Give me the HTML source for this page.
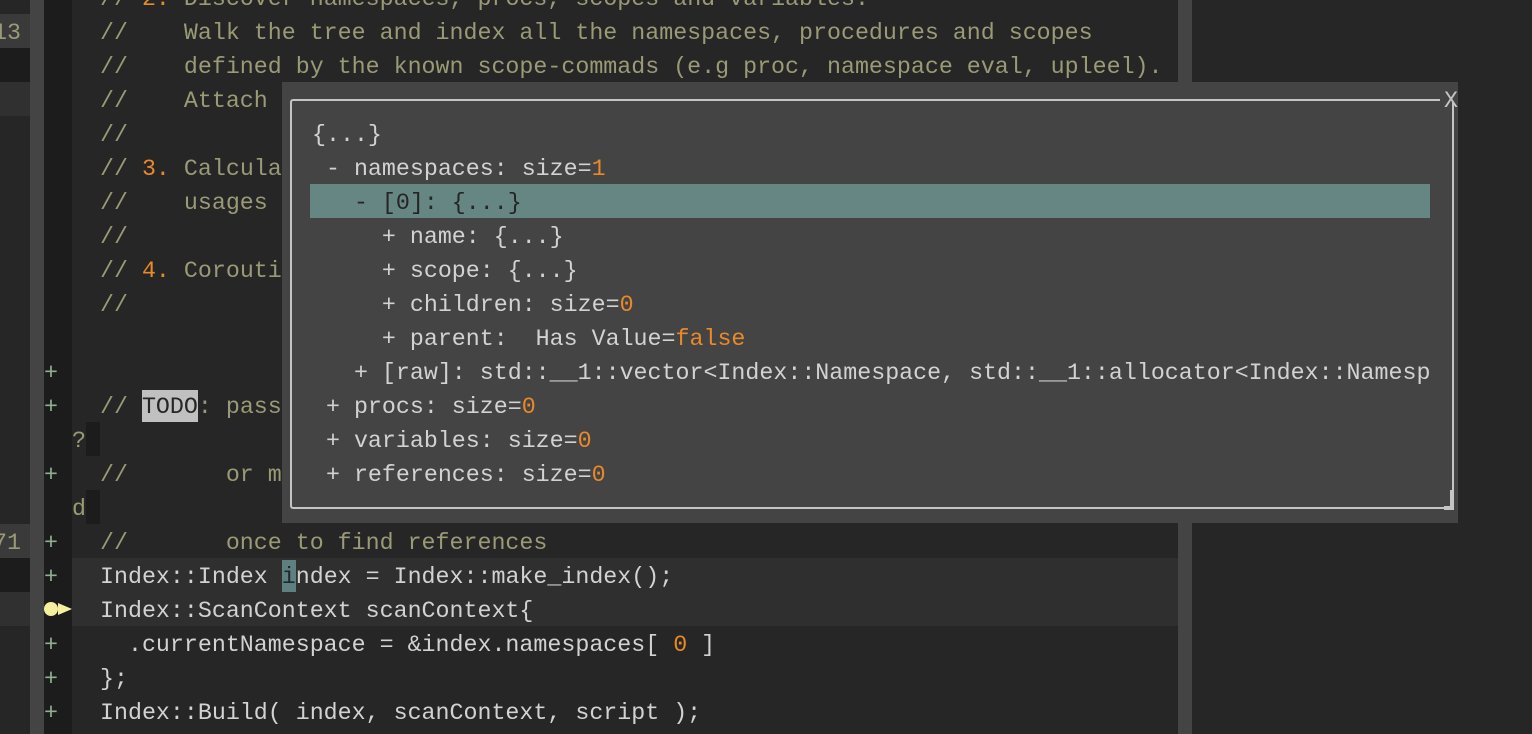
<!DOCTYPE html>
<html><head><meta charset="utf-8"><style>
*{margin:0;padding:0;box-sizing:border-box}
body{width:1532px;height:734px;overflow:hidden;background:#262626;position:relative;font-family:"Liberation Mono",monospace;font-size:23.3px}
.a{position:absolute}
.l{position:absolute;white-space:pre;height:34px;line-height:34px;margin-top:2px}
.c{color:#9a9a76}.o{color:#e8892a}.t{color:#d2d2d2}.g{color:#8fb08f}
</style></head><body>
<div class="a" style="left:0;top:0;width:30px;height:734px;background:#262626"></div>
<div class="a" style="left:0;top:14px;width:30px;height:34px;background:#3a3a3a"></div>
<div class="a" style="left:0;top:48px;width:30px;height:34px;background:#1c1c1c"></div>
<div class="a" style="left:0;top:82px;width:30px;height:34px;background:#303030"></div>
<div class="a" style="left:0;top:524px;width:30px;height:34px;background:#3a3a3a"></div>
<div class="a" style="left:0;top:558px;width:30px;height:34px;background:#1c1c1c"></div>
<div class="a" style="left:0;top:592px;width:30px;height:34px;background:#303030"></div>
<div class="l c" style="left:-7px;top:14px">13</div>
<div class="l c" style="left:-7px;top:524px">71</div>
<div class="a" style="left:30px;top:0;width:14px;height:734px;background:#444"></div>
<div class="a" style="left:44px;top:0;width:28px;height:734px;background:#1c1c1c"></div>
<div class="a" style="left:1178px;top:0;width:14px;height:734px;background:#444"></div>
<div class="a" style="left:72px;top:558px;width:1106px;height:68px;background:#2f2f2f"></div>
<div class="l c" style="left:100px;top:-20px">// <span class="o">2.</span> Discover namespaces, procs, scopes and variables.</div>
<div class="l c" style="left:100px;top:14px">//    Walk the tree and index all the namespaces, procedures and scopes</div>
<div class="l c" style="left:100px;top:48px">//    defined by the known scope-commads (e.g proc, namespace eval, upleel).</div>
<div class="l c" style="left:100px;top:82px">//    Attach</div>
<div class="l c" style="left:100px;top:116px">//</div>
<div class="l c" style="left:100px;top:150px">// <span class="o">3.</span> Calcula</div>
<div class="l c" style="left:100px;top:184px">//    usages</div>
<div class="l c" style="left:100px;top:218px">//</div>
<div class="l c" style="left:100px;top:252px">// <span class="o">4.</span> Corouti</div>
<div class="l c" style="left:100px;top:286px">//</div>
<div class="l g" style="left:44px;top:354px">+</div>
<div class="l g" style="left:44px;top:388px">+</div>
<div class="a" style="left:142px;top:390px;width:56px;height:32px;background:#c0c0c0"></div>
<div class="l c" style="left:100px;top:388px">// <span style="color:#262626">TODO</span>: pass</div>
<div class="a" style="left:86px;top:422px;width:14px;height:34px;background:#1c1c1c"></div>
<div class="l c" style="left:72px;top:422px">?</div>
<div class="l g" style="left:44px;top:456px">+</div>
<div class="l c" style="left:100px;top:456px">//       or m</div>
<div class="a" style="left:86px;top:490px;width:14px;height:34px;background:#1c1c1c"></div>
<div class="l c" style="left:72px;top:490px">d</div>
<div class="l g" style="left:44px;top:524px">+</div>
<div class="l c" style="left:100px;top:524px">//       once to find references</div>
<div class="l g" style="left:44px;top:558px">+</div>
<div class="a" style="left:282px;top:560px;width:14px;height:32px;background:#5f7f80"></div>
<div class="l t" style="left:100px;top:558px">Index::Index <span style="color:#1c2a2a">i</span>ndex = Index::make_index();</div>
<div class="a" style="left:44px;top:602px;width:14px;height:14px;border-radius:50%;background:#f5f0a0"></div>
<div class="a" style="left:58px;top:603px;width:0;height:0;border-top:6px solid transparent;border-bottom:6px solid transparent;border-left:14px solid #f5f0a0"></div>
<div class="l t" style="left:100px;top:592px">Index::ScanContext scanContext{</div>
<div class="l g" style="left:44px;top:626px">+</div>
<div class="l t" style="left:100px;top:626px">  .currentNamespace = &amp;index.namespaces[ <span class="o">0</span> ]</div>
<div class="l g" style="left:44px;top:660px">+</div>
<div class="l t" style="left:100px;top:660px">};</div>
<div class="l g" style="left:44px;top:694px">+</div>
<div class="l t" style="left:100px;top:694px">Index::Build( index, scanContext, script );</div>
<div class="a" style="left:282px;top:82px;width:1176px;height:441px;background:#444"></div>
<div class="a" style="left:290px;top:99px;width:1164px;height:410px;border:2px solid #c4c4c4;border-radius:3px"></div>
<div class="a" style="left:1440px;top:86px;width:18px;height:16px;background:#444"></div>
<div class="l" style="left:1444px;top:82px;color:#c4c4c4">X</div>
<div class="a" style="left:1444px;top:490px;width:10px;height:20px;border-right:4px solid #c4c4c4;border-bottom:4px solid #c4c4c4"></div>
<div class="a" style="left:310px;top:184px;width:1120px;height:34px;background:#668684"></div>
<div class="l t" style="left:312px;top:116px">{...}</div>
<div class="l t" style="left:312px;top:150px"> - namespaces: size=<span class="o">1</span></div>
<div class="l" style="left:312px;top:184px;color:#252525">   - [0]: {...}</div>
<div class="l t" style="left:312px;top:218px">     + name: {...}</div>
<div class="l t" style="left:312px;top:252px">     + scope: {...}</div>
<div class="l t" style="left:312px;top:286px">     + children: size=<span class="o">0</span></div>
<div class="l t" style="left:312px;top:320px">     + parent:  Has Value=<span class="o">false</span></div>
<div class="a" style="left:312px;top:354px;width:1118px;height:36px;overflow:hidden"><div class="l t" style="left:0;top:0">   + [raw]: std::__1::vector&lt;Index::Namespace, std::__1::allocator&lt;Index::Namespace&gt;&gt;</div></div>
<div class="l t" style="left:312px;top:388px"> + procs: size=<span class="o">0</span></div>
<div class="l t" style="left:312px;top:422px"> + variables: size=<span class="o">0</span></div>
<div class="l t" style="left:312px;top:456px"> + references: size=<span class="o">0</span></div>
</body></html>
